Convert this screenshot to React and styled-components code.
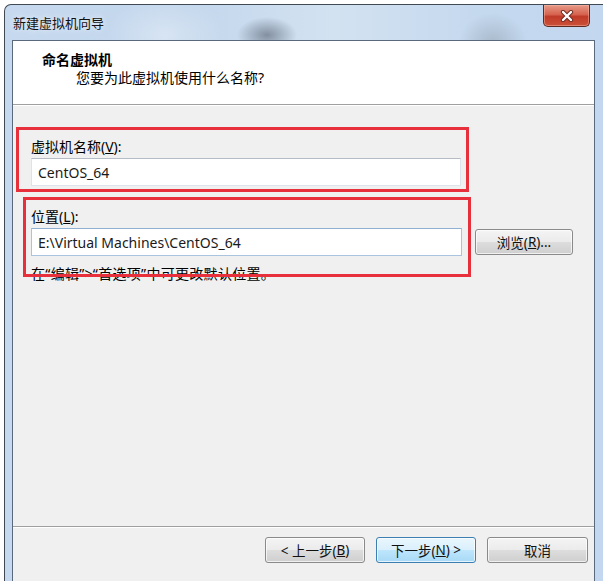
import styled, { createGlobalStyle } from 'styled-components';

const GlobalStyle = createGlobalStyle`
  html, body {
    margin: 0;
    padding: 0;
    background: #ffffff;
    overflow: hidden;
  }
  body {
    font-family: "Noto Sans", "Noto Sans CJK SC", sans-serif;
    font-size: 14px;
    color: #000;
  }
`;

const Window = styled.div`
  margin: 4px 0 0 4px;
  width: 599px;
  height: 577px;
  box-sizing: border-box;
  border-top: 1px solid #404a55;
  border-left: 1px solid #404a55;
  border-radius: 7px 0 0 0;
  overflow: hidden;
  display: flex;
  flex-direction: column;
  background:
    radial-gradient(ellipse 30px 18px at 262px 30px, rgba(70, 80, 95, 0.55), transparent),
    radial-gradient(ellipse 34px 30px at 488px 38px, rgba(120, 130, 140, 0.35), transparent),
    radial-gradient(ellipse 60px 40px at 160px 30px, rgba(255, 255, 255, 0.35), transparent),
    linear-gradient(90deg, #c6d9ef 0%, #c2d6ec 30%, #d3e2f1 55%, #c4d8ee 80%, #c3d8f0 100%);
`;

const TitleBar = styled.div`
  height: 35px;
  flex-shrink: 0;
  display: flex;
  justify-content: space-between;
  align-items: flex-start;
  padding-left: 8px;
`;

const TitleText = styled.div`
  font-family: "Noto Sans CJK SC", sans-serif;
  font-size: 13px;
  line-height: 16px;
  margin-top: 10px;
  color: #111;
  text-shadow: 0 0 6px rgba(255, 255, 255, 0.9);
`;

const CloseButton = styled.div`
  width: 47px;
  height: 22px;
  margin-right: 13px;
  box-sizing: border-box;
  border: 1px solid #5b2a22;
  border-top: none;
  border-radius: 0 0 5px 5px;
  background: linear-gradient(180deg, #e79a88 0%, #d5634f 45%, #c03a28 55%, #cb523a 100%);
  box-shadow: inset 0 0 0 1px rgba(255, 190, 175, 0.45);
  display: flex;
  align-items: center;
  justify-content: center;
`;

const Frame = styled.div`
  flex: 1;
  display: flex;
  padding: 0 8px 0 7px;
`;

const Client = styled.div`
  flex: 1;
  display: flex;
  flex-direction: column;
  border: 1px solid #5a6a7c;
  border-bottom: none;
  background: #f0f0f0;
`;

const Header = styled.div`
  height: 64px;
  flex-shrink: 0;
  background: #ffffff;
  border-bottom: 1px solid #a0a0a0;
  padding: 9px 0 0 29px;
  box-sizing: border-box;
`;

const HeaderTitle = styled.div`
  font-family: "Noto Sans CJK SC", sans-serif;
  font-weight: 700;
  font-size: 14px;
  line-height: 18px;
`;

const HeaderSub = styled.div`
  font-family: "Noto Sans", "Noto Sans CJK SC", sans-serif;
  font-size: 14px;
  line-height: 18px;
  margin: 1px 0 0 34px;
`;

const Body = styled.div`
  position: relative;
  flex: 1;
  border-top: 1px solid #ffffff;
  padding: 33px 0 0 18px;
  display: flex;
  flex-direction: column;
`;

const Label = styled.div`
  font-size: 14px;
  line-height: 16px;
  margin-top: ${(p) => p.gap || 0}px;
  margin-bottom: 3px;
`;

const Key = styled.span`
  text-decoration: underline;
`;

const Row = styled.div`
  display: flex;
  align-items: center;
  gap: 13px;
`;

const TextBox = styled.div`
  width: ${(p) => p.w}px;
  height: 28px;
  box-sizing: border-box;
  background: #ffffff;
  border: 1px solid ${(p) => (p.focus ? '#a9c4de' : '#dde3ea')};
  border-top-color: ${(p) => (p.focus ? '#8fb0d2' : '#b5bcc6')};
  padding-left: 6px;
  display: flex;
  align-items: center;
  font-family: "Noto Sans", sans-serif;
  font-size: 14px;
  color: #1a1a1a;
`;

const Hint = styled.div`
  font-family: "Noto Sans", "Noto Sans CJK SC", sans-serif;
  font-size: 14px;
  line-height: 16px;
  margin-top: 10px;
  letter-spacing: 0.3px;
`;

const Annotation = styled.div`
  position: absolute;
  left: ${(p) => p.x}px;
  top: ${(p) => p.y}px;
  width: ${(p) => p.w}px;
  height: ${(p) => p.h}px;
  box-sizing: border-box;
  border: 3px solid #e8303c;
  pointer-events: none;
`;

const Footer = styled.div`
  height: 44px;
  flex-shrink: 0;
  border-top: 1px solid #a0a0a0;
  box-shadow: inset 0 1px 0 #ffffff;
  display: flex;
  justify-content: flex-end;
  align-items: flex-start;
  padding: 10px 6px 0 0;
  gap: 11px;
`;

const Button = styled.div`
  width: ${(p) => p.w || 100}px;
  height: 26px;
  box-sizing: border-box;
  border: 1px solid ${(p) => (p.primary ? '#3c7fb1' : '#8a8a8a')};
  border-radius: 3px;
  background: ${(p) =>
    p.primary
      ? 'linear-gradient(180deg, #eaf6fd 0%, #d9f0fc 50%, #bee6fd 51%, #a7d9f5 100%)'
      : 'linear-gradient(180deg, #f4f4f4 0%, #ebebeb 50%, #dddddd 51%, #cfcfcf 100%)'};
  box-shadow: inset 0 0 0 1px rgba(255, 255, 255, 0.7);
  display: flex;
  align-items: center;
  justify-content: center;
  font-family: "Noto Sans", "Noto Sans CJK SC", sans-serif;
  font-size: 13.5px;
  color: #111;
`;

export default function App() {
  return (
    <>
      <GlobalStyle />
      <Window>
        <TitleBar>
          <TitleText>新建虚拟机向导</TitleText>
          <CloseButton>
            <svg width="14" height="12" viewBox="0 0 14 12">
              <path d="M3 2 L11 10 M11 2 L3 10" stroke="#6b2a20" strokeWidth="4.2" strokeLinecap="round" />
              <path d="M3 2 L11 10 M11 2 L3 10" stroke="#ffffff" strokeWidth="2.4" strokeLinecap="round" />
            </svg>
          </CloseButton>
        </TitleBar>
        <Frame>
          <Client>
            <Header>
              <HeaderTitle>命名虚拟机</HeaderTitle>
              <HeaderSub>您要为此虚拟机使用什么名称?</HeaderSub>
            </Header>
            <Body>
              <Label>
                虚拟机名称(<Key>V</Key>):
              </Label>
              <TextBox w={430}>CentOS_64</TextBox>
              <Label gap={23}>
                位置(<Key>L</Key>):
              </Label>
              <Row>
                <TextBox w={431} focus>
                  E:\Virtual Machines\CentOS_64
                </TextBox>
                <Button w={98}>
                  浏览(<Key>R</Key>)...
                </Button>
              </Row>
              <Hint>在“编辑”&gt;“首选项”中可更改默认位置。</Hint>

              <Annotation x={3} y={21} w={453} h={65} />
              <Annotation x={10} y={91} w={448} h={80} />
            </Body>
            <Footer>
              <Button w={100}>
                &lt; 上一步(<Key>B</Key>)
              </Button>
              <Button w={100} primary>
                下一步(<Key>N</Key>) &gt;
              </Button>
              <Button w={101}>取消</Button>
            </Footer>
          </Client>
        </Frame>
      </Window>
    </>
  );
}
